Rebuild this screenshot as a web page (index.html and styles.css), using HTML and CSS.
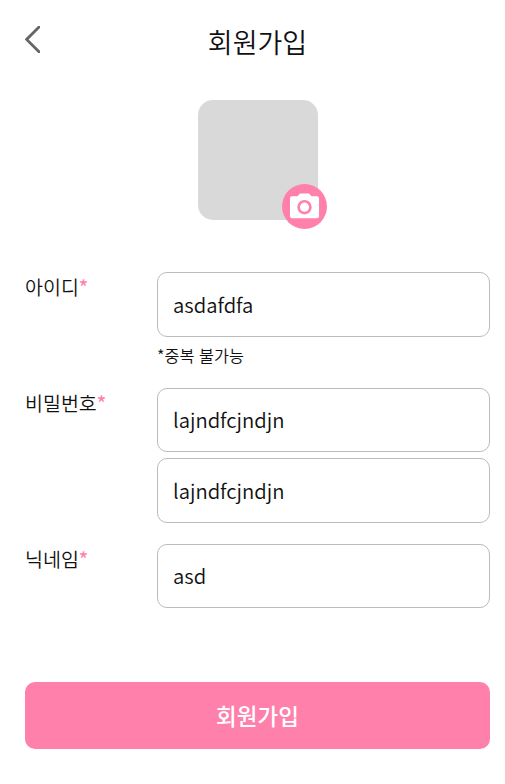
FILE: index.html
```html
<!doctype html>
<html lang="ko">
<head>
<meta charset="UTF-8">
<title>회원가입</title>
<link rel="stylesheet" href="styles.css">
</head>

<body>
    <div class="join">
        <header class="header">
            <a class="back" href="#">
                <svg width="15" height="27" viewBox="0 0 15 27">
                    <path d="M15.5 -0.5L1.6 13.4L15.5 27.3" fill="none" stroke="#666" stroke-width="2.8"/>
                </svg>
            </a>
            <h1 class="title">회원가입</h1>
        </header>

        <div class="profile">
            <button type="button" class="camera">
                <svg width="45" height="45" viewBox="0 0 45 45">
                    <circle cx="22.5" cy="22.5" r="22.5" fill="#ff80aa"/>
                    <path d="M10 12.3H15.5L18 9.5H27L29.5 12.3H35Q37 12.3 37 14.3V32.3Q37 34.3 35 34.3H10Q8 34.3 8 32.3V14.3Q8 12.3 10 12.3Z" fill="#fff"/>
                    <circle cx="22.5" cy="23.2" r="5.9" fill="none" stroke="#ff80aa" stroke-width="2.6"/>
                </svg>
            </button>
        </div>

        <form>
            <div class="row rowId">
                <label class="label" for="userId">아이디<span class="star">*</span></label>
                <div class="fields">
                    <input type="text" id="userId" class="field" value="asdafdfa">
                    <p class="hint">*중복 불가능</p>
                </div>
            </div>
            <div class="row rowPassword">
                <label class="label" for="password">비밀번호<span class="star">*</span></label>
                <div class="fields">
                    <input type="text" id="password" class="field" value="lajndfcjndjn">
                    <input type="text" id="passwordCheck" class="field" value="lajndfcjndjn">
                </div>
            </div>
            <div class="row">
                <label class="label" for="nickname">닉네임<span class="star">*</span></label>
                <div class="fields">
                    <input type="text" id="nickname" class="field" value="asd">
                </div>
            </div>
            <button type="button" class="submit">회원가입</button>
        </form>
    </div>
</body>
</html>
```

FILE: styles.css
```css
* {
    box-sizing: border-box;
}

body {
    margin: 0;
    background-color: #fff;
    color: #111;
    font-family: "Noto Sans CJK KR", sans-serif;
    font-weight: 350;
}

.join {
    padding: 24px 15px 35px 25px;
}

.header {
    display: grid;
    grid-template-columns: 50px 1fr 50px;
    height: 76px;
}

.back {
    height: 27px;
    margin-top: 2px;
}

.back svg,
.camera svg {
    display: block;
}

.title {
    margin: 0;
    font-size: 27px;
    font-weight: 350;
    line-height: 36px;
    text-align: center;
}

.profile {
    position: relative;
    width: 120px;
    height: 120px;
    margin: 0 auto 52px;
    border-radius: 15px;
    background-color: #d9d9d9;
    left: 0.5px;
}

.camera {
    position: absolute;
    right: -9px;
    bottom: -9px;
    padding: 0;
    border: 0;
    background: none;
    cursor: pointer;
}

.row {
    display: grid;
    grid-template-columns: 132px 1fr;
}

.rowId {
    height: 115.6px;
}

.rowPassword {
    height: 156px;
}

.label {
    font-size: 19.5px;
    line-height: 30px;
}

.star {
    color: #ff80aa;
    font-weight: 500;
}

.fields {
    display: flex;
    flex-direction: column;
    gap: 6px;
}

.field {
    width: 100%;
    height: 64.5px;
    padding: 0 15px;
    border: 1px solid #bbb;
    border-radius: 10px;
    background-color: #fff;
    color: #111;
    font-family: inherit;
    font-size: 20.25px;
    font-weight: 350;
    outline: none;
}

.hint {
    margin: 0;
    font-size: 16.3px;
    line-height: 24px;
}

.submit {
    display: block;
    width: 100%;
    height: 67px;
    margin-top: 73.9px;
    border: 0;
    border-radius: 10px;
    background-color: #ff80aa;
    color: #fff;
    font-family: inherit;
    font-size: 22.5px;
    font-weight: 500;
    cursor: pointer;
}
```
